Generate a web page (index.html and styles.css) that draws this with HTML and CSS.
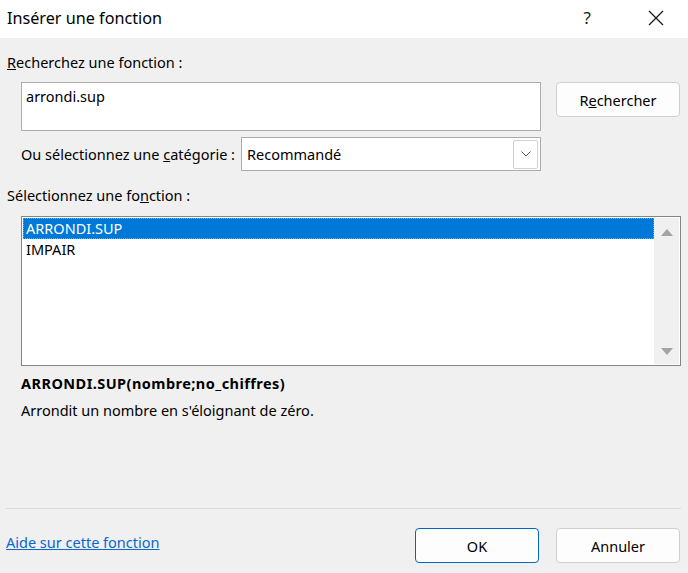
FILE: index.html
```html
<!DOCTYPE html>
<html lang="fr">
<head>
<meta charset="utf-8">
<title>Insérer une fonction</title>
<link rel="stylesheet" href="styles.css">
</head>
<body>
<div class="dialog">
  <div class="titlebar">
    <span class="title">Insérer une fonction</span>
    <span class="help">?</span>
    <svg class="close" width="16" height="16" viewBox="0 0 16 16"><path d="M1 1 L15 15 M15 1 L1 15" stroke="#1a1a1a" stroke-width="1.3" fill="none"/></svg>
  </div>
  <div class="body">
    <div class="label first"><u>R</u>echerchez une fonction :</div>
    <div class="search-row">
      <div class="textbox">arrondi.sup</div>
      <button class="btn"><span>R<u>e</u>chercher</span></button>
    </div>
    <div class="cat-row">
      <span class="cat-label">Ou sélectionnez une <u>c</u>atégorie :</span>
      <div class="select">
        <span class="select-value">Recommandé</span>
        <span class="select-btn"><svg width="10" height="6" viewBox="0 0 10 6"><path d="M0.5 0.5 L5 5 L9.5 0.5" stroke="#555" stroke-width="1" fill="none"/></svg></span>
      </div>
    </div>
    <div class="label third">Sélectionnez une fo<u>n</u>ction :</div>
    <div class="listbox">
      <div class="items">
        <div class="item selected">ARRONDI.SUP</div>
        <div class="item">IMPAIR</div>
      </div>
      <div class="scrollbar">
        <svg width="12" height="7" viewBox="0 0 12 7"><path d="M6 0 L12 7 L0 7 Z" fill="#a3a3a3"/></svg>
        <svg width="12" height="7" viewBox="0 0 12 7"><path d="M0 0 L12 0 L6 7 Z" fill="#a3a3a3"/></svg>
      </div>
    </div>
    <div class="signature">ARRONDI.SUP(nombre;no_chiffres)</div>
    <div class="description">Arrondit un nombre en s'éloignant de zéro.</div>
  </div>
  <div class="separator"></div>
  <div class="footer">
    <a class="help-link" href="#">Aide sur cette fonction</a>
    <div class="actions">
      <button class="btn primary">OK</button>
      <button class="btn">Annuler</button>
    </div>
  </div>
</div>
</body>
</html>
```

FILE: styles.css
```css
* { box-sizing: border-box; }
html, body { margin: 0; padding: 0; }
body {
  background: #f0f0f0;
  font-family: "Noto Sans", "Open Sans", "Liberation Sans", sans-serif;
  font-size: 14.5px;
  color: #000;
  width: 688px;
  height: 573px;
  overflow: hidden;
}
.dialog { display: flex; flex-direction: column; height: 573px; }
.titlebar {
  height: 38px;
  background: #fff;
  display: flex;
  align-items: center;
  padding-left: 7px;
}
.title { font-size: 16.2px; flex: 1; color: #000; margin-top: -2px; }
.help { font-size: 17px; color: #1a1a1a; margin-right: 57px; margin-top: -3px; }
.close { margin-right: 24px; margin-top: -2px; }
.body { padding: 0 7px 0 7px; display: flex; flex-direction: column; }
.label { height: 20px; line-height: 20px; }
.label.first { margin-top: 14px; }
.search-row { display: flex; margin-top: 10px; padding-left: 14px; align-items: flex-start; }
.textbox {
  width: 520px; height: 49px;
  background: #fff;
  border: 1px solid #acacac;
  padding: 3px 4px;
  line-height: 20px;
}
.btn {
  font: inherit;
  color: #000;
  width: 124px; height: 35px;
  background: #fdfdfd;
  border: 1px solid #d0d0d0;
  border-radius: 4px;
  padding: 0;
}
.search-row .btn { margin-left: 15px; }
.cat-row { display: flex; align-items: center; margin-top: 6px; padding-left: 14px; }
.cat-label { width: 220px; }
.select {
  width: 300px; height: 34px;
  background: #fff;
  border: 1px solid #acacac;
  display: flex; align-items: center;
  padding: 0 2px 0 5px;
}
.select-value { flex: 1; }
.select-btn {
  width: 25px; height: 29px;
  border: 1px solid #d0d0d0;
  border-radius: 2px;
  display: flex; align-items: center; justify-content: center;
}
.label.third { margin-top: 14px; }
.listbox {
  margin: 11px 0 0 14px;
  width: 660px; height: 150px;
  background: #fff;
  border: 1px solid #848484;
  display: flex;
  padding: 1px;
}
.items { flex: 1; }
.item { height: 21px; line-height: 21px; padding-left: 3px; }
.item.selected {
  background: #0078d7; color: #fff;
  outline: 1px dotted #f08a24; outline-offset: -1px;
}
.scrollbar {
  width: 25px;
  background: #f0f0f0;
  display: flex; flex-direction: column; align-items: center; justify-content: space-between;
  padding: 11px 0 9px;
}
.signature { font-weight: bold; letter-spacing: 0.45px; margin: 7px 0 0 14px; height: 20px; line-height: 20px; }
.description { margin: 7px 0 0 14px; height: 20px; line-height: 20px; }
.separator { margin: 88px 7px 0 6px; height: 1px; background: #dadada; }
.footer {
  display: flex; align-items: center; justify-content: space-between;
  margin-top: 19px; padding: 0 8px 0 6px;
}
.help-link { color: #0a66d0; text-decoration: underline; margin-top: -7px; }
.actions { display: flex; gap: 17px; }
.btn.primary { border: 1px solid #0067c0; background: #fdfdfd; }
```
